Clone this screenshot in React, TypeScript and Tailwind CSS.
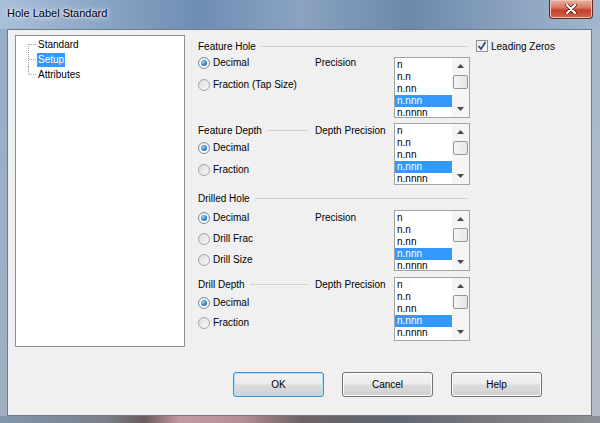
import React from 'react';

const precisions = ['n', 'n.n', 'n.nn', 'n.nnn', 'n.nnnn'];

function Arrow({ down }: { down?: boolean }) {
    return (
        <svg width="7" height="4" viewBox="0 0 7 4">
            <polygon points={down ? '0,0 7,0 3.5,4' : '0,4 7,4 3.5,0'} fill="#4a4a4a" />
        </svg>
    );
}

function PrecisionList({ className }: { className: string }) {
    return (
        <div className={`flex w-[76px] border border-[#a3a3a3] bg-white ${className}`}>
            <div className="flex-1 overflow-hidden pt-px">
                {precisions.map((p) => (
                    <div
                        key={p}
                        className={`h-[12px] pl-[2px] leading-[12px] ${p === 'n.nnn' ? 'bg-[#3399ff] text-white' : 'text-black'}`}
                    >
                        {p}
                    </div>
                ))}
            </div>
            <div className="flex w-[17px] flex-col items-center bg-[#f5f5f5]">
                <div className="flex h-[16px] items-center justify-center">
                    <Arrow />
                </div>
                <div className="mt-px h-[14px] w-[15px] rounded-[2px] border border-[#979797] bg-[linear-gradient(to_right,#f4f4f4,#e6e6e6)]" />
                <div className="flex-1" />
                <div className="flex h-[16px] items-center justify-center">
                    <Arrow down />
                </div>
            </div>
        </div>
    );
}

function Radio({ label, checked }: { label: string; checked?: boolean }) {
    return (
        <div className="flex h-[12px] items-center gap-[3px]">
            <div
                className={`flex h-[12px] w-[12px] items-center justify-center rounded-full border ${checked ? 'border-[#7a8a99] bg-[linear-gradient(to_bottom,#e8eef3,#ffffff)]' : 'border-[#a6a6a6] bg-[linear-gradient(135deg,#dcdcdc,#f9f9f9)]'}`}
            >
                {checked && (
                    <div className="h-[6px] w-[6px] rounded-full bg-[radial-gradient(circle_at_35%_35%,#9fd3f5,#2a7cc0_60%,#13508d)]" />
                )}
            </div>
            <span className="leading-[12px]">{label}</span>
        </div>
    );
}

function GroupLine() {
    return <div className="ml-[5px] h-px flex-1 bg-[#d2d2d2]" />;
}

function TreeRow({ label, kind, selected }: { label: string; kind: 'first' | 'mid' | 'last'; selected?: boolean }) {
    const y1 = kind === 'first' ? 7 : 0;
    const y2 = kind === 'last' ? 7.5 : 15;
    return (
        <div className="flex h-[15px] items-center">
            <svg width="21" height="15" viewBox="0 0 21 15" className="shrink-0">
                <line x1="12.5" y1={y1} x2="12.5" y2={y2} stroke="#a0a0a0" strokeDasharray="1 1" />
                <line x1="13" y1="7.5" x2="20" y2="7.5" stroke="#a0a0a0" strokeDasharray="1 1" />
            </svg>
            <span className={`px-px leading-[14px] ${selected ? 'bg-[#3399ff] text-white' : 'text-black'}`}>{label}</span>
        </div>
    );
}

function Button({ label, primary }: { label: string; primary?: boolean }) {
    return (
        <div
            className={`flex h-[25px] w-[91px] items-center justify-center rounded-[3px] border bg-[linear-gradient(to_bottom,#f3f3f3_0%,#ebebeb_48%,#dcdcdc_52%,#d0d0d0_100%)] ${primary ? 'border-[#3c8fd0] shadow-[inset_0_0_0_1px_#aee2fb]' : 'border-[#707070] shadow-[inset_0_0_0_1px_#fbfbfb]'}`}
        >
            {label}
        </div>
    );
}

export default function App() {
    return (
        <div className="flex h-[423px] w-[600px] flex-col overflow-hidden bg-[#8ea5c2] font-['Liberation_Sans',Arial,sans-serif] text-[10px] text-black">
            {/* Title bar */}
            <div className="flex h-[29px] shrink-0 items-start justify-between bg-[linear-gradient(to_right,#a9c0db_0%,#8ea8c8_15%,#6f8db3_33%,#8aa3c2_50%,#6c88ab_68%,#8aa2bf_85%,#a2b6ce_100%)]">
                <span className="pl-[7px] pt-[6px] text-[11px] leading-[14px] [text-shadow:0_0_6px_#ffffff,0_0_3px_#ffffff]">
                    Hole Label Standard
                </span>
                <div className="mr-[7px] flex h-[19px] w-[44px] items-center justify-center rounded-b-[4px] border border-t-0 border-[#5b2a24] bg-[linear-gradient(to_bottom,#eab3a6_0%,#d8735f_45%,#c7402b_55%,#d2644a_100%)] shadow-[inset_0_0_0_1px_#f1c4b8]">
                    <svg width="12" height="10" viewBox="0 0 12 10">
                        <path d="M2 1 L10 9 M10 1 L2 9" stroke="#4a1a14" strokeWidth="3.6" strokeLinecap="round" />
                        <path d="M2 1 L10 9 M10 1 L2 9" stroke="#ffffff" strokeWidth="2.2" strokeLinecap="round" />
                    </svg>
                </div>
            </div>

            {/* Frame + client */}
            <div className="flex flex-1">
                <div className="w-[7px] bg-[linear-gradient(to_bottom,#97aecb,#a1b0c0)]" />
                <div className="flex flex-1 flex-col border border-[#6f7a86] bg-[#f0f0f0] pl-[7px] pt-[5px]">
                    <div className="flex">
                        {/* Tree */}
                        <div className="h-[312px] w-[170px] border border-[#8c9096] bg-white pt-px">
                            <TreeRow label="Standard" kind="first" />
                            <TreeRow label="Setup" kind="mid" selected />
                            <TreeRow label="Attributes" kind="last" />
                        </div>

                        {/* Options */}
                        <div className="ml-[13px] flex flex-col">
                            {/* Feature Hole */}
                            <div className="mt-[4px] flex h-[14px] items-center">
                                <div className="flex w-[270px] items-center">
                                    <span>Feature Hole</span>
                                    <GroupLine />
                                </div>
                                <div className="ml-[8px] flex items-center gap-[3px]">
                                    <div className="flex h-[12px] w-[12px] items-center justify-center border border-[#8e8f8f] bg-[linear-gradient(135deg,#e6e6e6,#ffffff)]">
                                        <svg width="10" height="10" viewBox="0 0 10 10">
                                            <path d="M1.5 5 L4 8 L8.5 1" fill="none" stroke="#2c4f8a" strokeWidth="1.8" />
                                        </svg>
                                    </div>
                                    <span>Leading Zeros</span>
                                </div>
                            </div>
                            <div className="mt-[4px] flex">
                                <div className="flex w-[117px] flex-col gap-[10px]">
                                    <Radio label="Decimal" checked />
                                    <Radio label="Fraction (Tap Size)" />
                                </div>
                                <div className="w-[79px] leading-[12px]">Precision</div>
                                <PrecisionList className="h-[61px]" />
                            </div>

                            {/* Feature Depth */}
                            <div className="mt-[5px] flex">
                                <div className="flex w-[196px] flex-col">
                                    <div className="flex h-[14px] items-center">
                                        <div className="flex w-[117px] items-center pr-[7px]">
                                            <span>Feature Depth</span>
                                            <GroupLine />
                                        </div>
                                        <span>Depth Precision</span>
                                    </div>
                                    <div className="mt-[5px] flex flex-col gap-[10px]">
                                        <Radio label="Decimal" checked />
                                        <Radio label="Fraction" />
                                    </div>
                                </div>
                                <PrecisionList className="h-[62px]" />
                            </div>

                            {/* Drilled Hole */}
                            <div className="mt-[6px] flex h-[14px] w-[270px] items-center">
                                <span>Drilled Hole</span>
                                <GroupLine />
                            </div>
                            <div className="mt-[5px] flex">
                                <div className="flex w-[117px] flex-col gap-[9px] pt-[2px]">
                                    <Radio label="Decimal" checked />
                                    <Radio label="Drill Frac" />
                                    <Radio label="Drill Size" />
                                </div>
                                <div className="w-[79px] pt-[2px] leading-[12px]">Precision</div>
                                <PrecisionList className="h-[61px]" />
                            </div>

                            {/* Drill Depth */}
                            <div className="mt-[6px] flex">
                                <div className="flex w-[196px] flex-col">
                                    <div className="flex h-[14px] items-center">
                                        <div className="flex w-[117px] items-center pr-[7px]">
                                            <span>Drill Depth</span>
                                            <GroupLine />
                                        </div>
                                        <span>Depth Precision</span>
                                    </div>
                                    <div className="mt-[6px] flex flex-col gap-[8px]">
                                        <Radio label="Decimal" checked />
                                        <Radio label="Fraction" />
                                    </div>
                                </div>
                                <PrecisionList className="h-[64px]" />
                            </div>
                        </div>
                    </div>

                    {/* Buttons */}
                    <div className="mt-[25px] flex justify-end gap-[18px] pr-[49px]">
                        <Button label="OK" primary />
                        <Button label="Cancel" />
                        <Button label="Help" />
                    </div>
                </div>
                <div className="w-[8px] bg-[linear-gradient(to_bottom,#a8b9cc,#b4bcc6)]" />
            </div>

            {/* Bottom frame */}
            <div className="h-[7px] shrink-0 bg-[linear-gradient(to_right,#8296ad_0%,#7a7f88_18%,#6a5a5c_24%,#c49aa2_30%,#b58f96_40%,#6e6466_50%,#5e6570_65%,#77777c_80%,#8c8f95_100%)]" />
        </div>
    );
}
